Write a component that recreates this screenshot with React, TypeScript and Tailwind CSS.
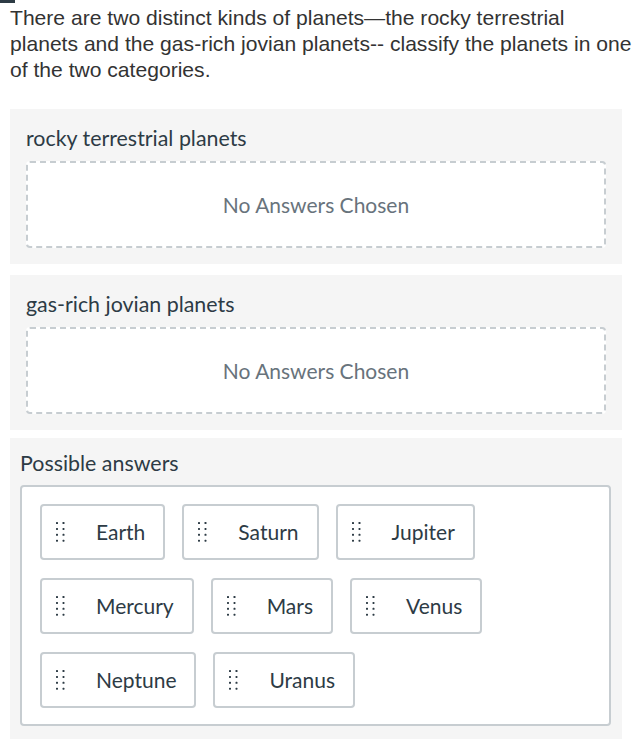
const planets = [
  "Earth",
  "Saturn",
  "Jupiter",
  "Mercury",
  "Mars",
  "Venus",
  "Neptune",
  "Uranus",
];

function DragDots() {
  const dots = [];
  for (let r = 0; r < 4; r++) {
    for (let c = 0; c < 2; c++) {
      dots.push(
        <rect key={`${r}-${c}`} x={c * 6.5} y={r * 5.9} width="2" height="2" rx="0.6" fill="#2d3b45" />
      );
    }
  }
  return (
    <svg width="9" height="20" viewBox="0 0 9 20" className="shrink-0">
      {dots}
    </svg>
  );
}

function DropZone({ label }: { label: string }) {
  return (
    <section className="bg-[#f5f5f5] px-4 pt-[15px] pb-4">
      <h2 className="mb-[9px] text-[21.4px] leading-[28px] text-[#2d3b45]">{label}</h2>
      <div className="flex h-[87px] items-center justify-center rounded-[4px] border-2 border-dashed border-[#c7cdd1] bg-white">
        <span className="text-[21px] text-[#68737c]">No Answers Chosen</span>
      </div>
    </section>
  );
}

export default function App() {
  return (
    <main className="relative min-h-[744px] w-full bg-white font-['Lato','Noto_Sans',sans-serif]">
      <div className="absolute left-0 top-0 h-[3px] w-[15px] bg-[#2d3b45]" />

      <p className="pl-[10px] pr-[7px] pt-[5px] font-['Liberation_Sans',Arial,sans-serif] text-[21.1px] leading-[26px] text-[#333]">
        There are two distinct kinds of planets—the rocky terrestrial planets and the gas-rich jovian
        planets-- classify the planets in one of the two categories.
      </p>

      <div className="mx-[10px] mt-[26px] flex w-[612px] flex-col gap-[11px]">
        <DropZone label="rocky terrestrial planets" />
        <DropZone label="gas-rich jovian planets" />

        <section className="-mt-[3px] bg-[#f5f5f5] pl-[10px] pr-[11px] pt-[11px] pb-[13px]">
          <h2 className="mb-[8px] text-[21.4px] leading-[28px] text-[#2d3b45]">Possible answers</h2>
          <div className="flex flex-wrap gap-x-[17px] gap-y-[18px] rounded-[4px] border-2 border-[#c7cdd1] bg-white px-[18px] pt-[17px] pb-[16px]">
            {planets.map((p) => (
              <div
                key={p}
                className="flex h-[56px] items-center gap-[31px] rounded-[4px] border-2 border-[#c7cdd1] bg-white pl-[14px] pr-[18px]"
              >
                <DragDots />
                <span className="text-[21px] text-[#2d3b45]">{p}</span>
              </div>
            ))}
          </div>
        </section>
      </div>
    </main>
  );
}
